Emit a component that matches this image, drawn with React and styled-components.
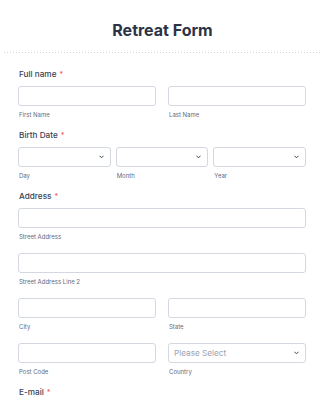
import styled, { createGlobalStyle } from 'styled-components'

const GlobalStyle = createGlobalStyle`
    body{
        margin: 0;
        background: #fff;
        font-family: Inter, "Noto Sans", sans-serif;
        color: #2c3345;
    }
`

const Page = styled.div`
    width: 325px;
    height: 400px;
    overflow: hidden;
`

const Header = styled.header`
    margin: 0 4px;
    padding: 20px 0 13px;
    text-align: center;
    background-image: linear-gradient(to right, #cdd2dc 1px, transparent 1px);
    background-size: 3px 1px;
    background-repeat: repeat-x;
    background-position: left bottom;
    h1{
        margin: 0;
        font-size: 16px;
        line-height: 20px;
        font-weight: 700;
        color: #2c3345;
    }
`

const Form = styled.form`
    display: flex;
    flex-direction: column;
    gap: 10px;
    padding: 15px 19px 0 18px;
`

const Field = styled.div`
    display: flex;
    flex-direction: column;
`

const Label = styled.div`
    height: 12px;
    font-size: 8.2px;
    line-height: 12px;
    font-weight: 500;
    color: #3a4256;
    margin-bottom: 6px;
    padding-left: 1px;
    span{
        color: #f4585a;
        font-size: 7px;
        line-height: 1;
        margin-left: 3px;
    }
`

const Rows = styled.div`
    display: flex;
    flex-direction: column;
    gap: 12px;
`

const Row = styled.div`
    display: grid;
    grid-template-columns: repeat(${p => p.cols || 1}, 1fr);
    column-gap: ${p => p.gap || 12}px;
`

const Cell = styled.div`
    display: flex;
    flex-direction: column;
    min-width: 0;
`

const Input = styled.input`
    box-sizing: border-box;
    width: 100%;
    height: 20px;
    margin: 0;
    padding: 0 5px;
    border: 1px solid #d3d8e1;
    border-radius: 3px;
    background: #fff;
    font: inherit;
    font-size: 8px;
    outline: none;
`

const SelectBox = styled.div`
    box-sizing: border-box;
    height: 20px;
    display: flex;
    align-items: center;
    justify-content: space-between;
    padding: 0 6px 0 5px;
    border: 1px solid #d3d8e1;
    border-radius: 3px;
    background: #fff;
    font-size: 8.2px;
    color: #9aa2b4;
`

const SubLabel = styled.div`
    margin-top: 5px;
    padding-left: 1px;
    font-size: 6px;
    line-height: 8px;
    color: #5f6a80;
`

function Chevron(){
    return (
        <svg width="5" height="4" viewBox="0 0 5 4">
            <polyline points="0.7,1 2.5,2.8 4.3,1" fill="none" stroke="#3a4256" strokeWidth="1" strokeLinecap="round" strokeLinejoin="round" />
        </svg>
    )
}

function Select({placeholder}){
    return (
        <SelectBox>
            <span>{placeholder}</span>
            <Chevron />
        </SelectBox>
    )
}

function Box({sub, select, placeholder}){
    return (
        <Cell>
            {select ? <Select placeholder={placeholder} /> : <Input type="text" />}
            <SubLabel>{sub}</SubLabel>
        </Cell>
    )
}

export default function App(){
    return (
        <Page>
            <GlobalStyle />
            <Header>
                <h1>Retreat Form</h1>
            </Header>
            <Form onSubmit={e => e.preventDefault()}>
                <Field>
                    <Label>Full name<span>*</span></Label>
                    <Row cols={2}>
                        <Box sub="First Name" />
                        <Box sub="Last Name" />
                    </Row>
                </Field>
                <Field>
                    <Label>Birth Date<span>*</span></Label>
                    <Row cols={3} gap={5}>
                        <Box select sub="Day" />
                        <Box select sub="Month" />
                        <Box select sub="Year" />
                    </Row>
                </Field>
                <Field>
                    <Label>Address<span>*</span></Label>
                    <Rows>
                        <Row>
                            <Box sub="Street Address" />
                        </Row>
                        <Row>
                            <Box sub="Street Address Line 2" />
                        </Row>
                        <Row cols={2}>
                            <Box sub="City" />
                            <Box sub="State" />
                        </Row>
                        <Row cols={2}>
                            <Box sub="Post Code" />
                            <Box select placeholder="Please Select" sub="Country" />
                        </Row>
                    </Rows>
                </Field>
                <Field>
                    <Label>E-mail<span>*</span></Label>
                </Field>
            </Form>
        </Page>
    )
}
